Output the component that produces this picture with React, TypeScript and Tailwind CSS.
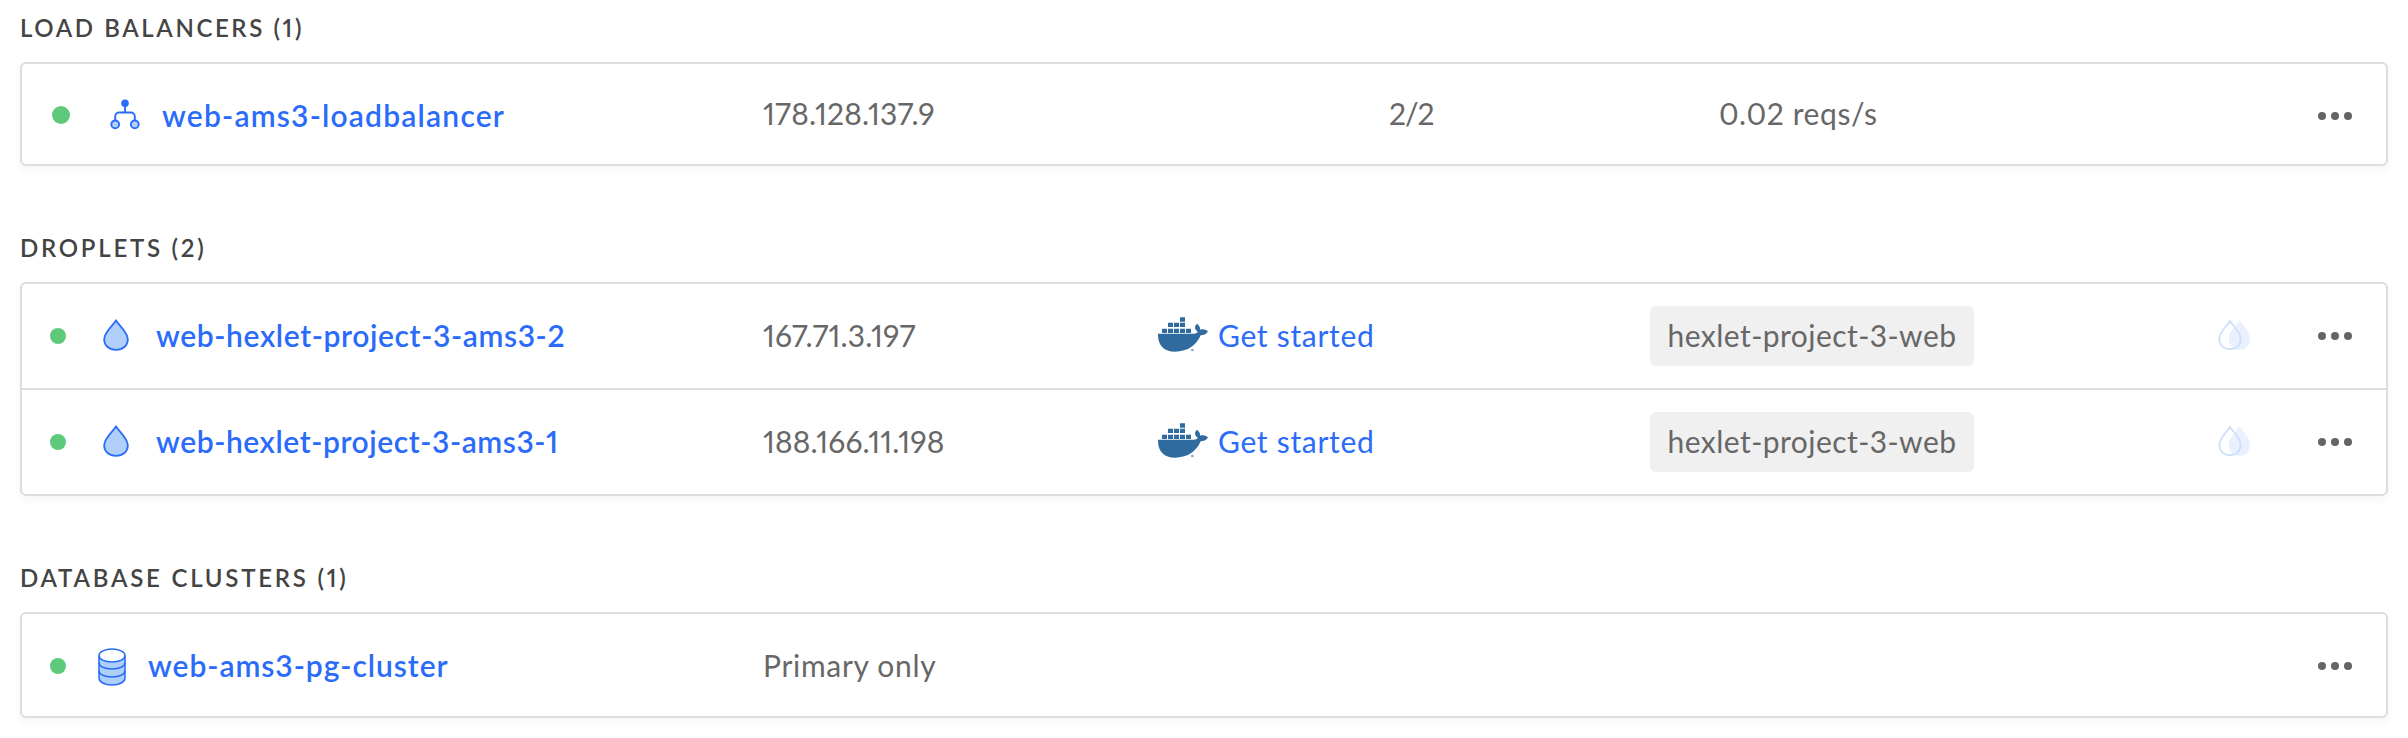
import type { ReactNode } from "react";

function Heading({ children, className }: { children: ReactNode; className: string }) {
  return (
    <h2 className={`h-[29px] whitespace-nowrap text-[24px] leading-[29px] font-semibold text-[#444444] ${className}`}>
      {children}
    </h2>
  );
}

function Card({ children, className = "" }: { children: ReactNode; className?: string }) {
  return (
    <div className={`rounded-[6px] border-2 border-[#dddddd] bg-white shadow-[0_4px_8px_rgba(0,0,0,0.04)] ${className}`}>
      {children}
    </div>
  );
}

function StatusDot({ className }: { className: string }) {
  return <span className={`shrink-0 rounded-full bg-[#5fc97b] ${className}`} />;
}

function LoadBalancerIcon() {
  return (
    <svg width="30" height="32" viewBox="0 0 30 32" fill="none" className="shrink-0">
      <path d="M15 4v10M5.2 21v-3.500a4 4 0 0 1 4-4h11.600a4 4 0 0 1 4 4V21" stroke="#2a6cf9" strokeWidth="1.9" />
      <circle cx="15" cy="4.200" r="3.800" fill="#2a6cf9" />
      <circle cx="5.200" cy="25.400" r="3.900" fill="#b3d0fb" stroke="#2a6cf9" strokeWidth="1.900" />
      <circle cx="24.800" cy="25.400" r="3.900" fill="#b3d0fb" stroke="#2a6cf9" strokeWidth="1.900" />
    </svg>
  );
}

function DropletIcon() {
  return (
    <svg width="26" height="32" viewBox="0 0 26 32" className="shrink-0">
      <path
        d="M13 1.600C9.500 7 1.200 13.500 1.200 20.200C1.200 26.800 6.300 30.800 13 30.800C19.700 30.800 24.800 26.800 24.800 20.200C24.800 13.500 16.500 7 13 1.600Z"
        fill="#b1cffb"
        stroke="#2a6cf9"
        strokeWidth="1.800"
      />
    </svg>
  );
}

function DatabaseIcon() {
  return (
    <svg width="28" height="38" viewBox="0 0 28 38" className="shrink-0">
      <g stroke="#2a6cf9" strokeWidth="1.500">
        <path d="M1 7.500V30c0 4 5.600 7 13 7s13-3 13-7V7.500" fill="#adcffa" />
        <ellipse cx="14" cy="7.500" rx="13" ry="6.500" fill="#ffffff" />
        <path d="M1 14.500c0 4 5.600 6.500 13 6.500s13-2.500 13-6.500M1 22.500c0 4 5.600 6.500 13 6.500s13-2.500 13-6.500" fill="none" />
      </g>
    </svg>
  );
}

function DockerIcon() {
  return (
    <svg width="50" height="35" viewBox="84 82 150 105" className="shrink-0" fill="#2f6b9f">
      <path d="M84 132H190C199 131 203 129 203 126C194 120 192 110 201 102C208 107 211 113 210 120C218 117 228 119 234 125C229 134 221 137 212 137C200 165 175 186 135 186C100 186 83 165 84 132Z" />
      <path d="M150 83h15v13h-15zM114 99h15v13h-15zM132 99h15v13h-15zM150 99h15v13h-15zM96 117h15v13h-15zM114 117h15v13h-15zM132 117h15v13h-15zM150 117h15v13h-15zM168 117h15v13h-15z" />
      <circle cx="187" cy="181" r="4" opacity="0.6" />
    </svg>
  );
}

function FloatingDropsIcon() {
  return (
    <svg width="34" height="32" viewBox="0 0 34 32" className="shrink-0">
      <path d="M21.500 1C18.500 6.500 10.700 12.500 10.700 19.800C10.700 26.500 15.500 31 21.500 31S32.300 26.500 32.300 19.800C32.300 12.500 24.500 6.500 21.500 1Z" fill="#eaf1fe" />
      <path d="M12 2C9 7 1.300 13 1.300 19.800C1.300 26 6 30.100 12 30.100S22.700 26 22.700 19.800C22.700 13 15 7 12 2Z" fill="none" stroke="#ccddfd" strokeWidth="1.700" />
    </svg>
  );
}

function MoreMenu({ className = "" }: { className?: string }) {
  return (
    <button aria-label="More" className={`mr-[34px] ml-auto flex gap-[5px] ${className}`}>
      <span className="size-2 rounded-full bg-[#646464]" />
      <span className="size-2 rounded-full bg-[#646464]" />
      <span className="size-2 rounded-full bg-[#646464]" />
    </button>
  );
}

function Name({ children, className }: { children: ReactNode; className: string }) {
  return <a className={`font-semibold text-[#2a6cf9] ${className}`}>{children}</a>;
}

type Droplet = { name: string; nameClass: string; ip: string };

const droplets: Droplet[] = [
  { name: "web-hexlet-project-3-ams3-2", nameClass: "tracking-[0.62px]", ip: "167.71.3.197" },
  { name: "web-hexlet-project-3-ams3-1", nameClass: "tracking-[0.57px]", ip: "188.166.11.198" },
];

function DropletRow({ name, nameClass, ip }: Droplet) {
  return (
    <div className="box-content flex h-[104px] items-center">
      <div className="flex w-[741px] items-center pl-7">
        <StatusDot className="mr-[37px] size-4" />
        <div className="mr-[27px] pb-[3px]">
          <DropletIcon />
        </div>
        <Name className={`pb-[3px] ${nameClass}`}>{name}</Name>
      </div>
      <div className="w-[395px] pb-[3px] tracking-[0.12px]">{ip}</div>
      <div className="flex w-[492px] items-center gap-[10px] pb-[3px]">
        <DockerIcon />
        <a className="tracking-[0.7px] text-[#2a6cf9]">Get started</a>
      </div>
      <div className="w-[568px]">
        <span className="flex h-[60px] w-[324px] items-center justify-center rounded-[6px] bg-[#f0f0f0] pb-[3px] tracking-[0.45px]">
          hexlet-project-3-web
        </span>
      </div>
      <div className="pb-[3px]">
        <FloatingDropsIcon />
      </div>
      <MoreMenu />
    </div>
  );
}

export default function App() {
  return (
    <main className="h-[738px] w-[2408px] overflow-hidden bg-white px-5 pt-[13px] font-['Lato',sans-serif] text-[30px] leading-9 whitespace-nowrap text-[#676767] proportional-nums">
      <section>
        <Heading className="tracking-[2.6px]">LOAD BALANCERS (1)</Heading>
        <Card className="mt-5">
          <div className="flex h-[100px] items-center">
            <div className="flex w-[741px] items-center pl-[30px]">
              <StatusDot className="mt-[2px] mr-[40px] size-[18px]" />
              <div className="mr-[22px] pt-[2px]">
                <LoadBalancerIcon />
              </div>
              <Name className="pt-px tracking-[1.2px]">web-ams3-loadbalancer</Name>
            </div>
            <div className="w-[626px] pb-[3px] tracking-[0.2px]">178.128.137.9</div>
            <div className="w-[330px] pb-[3px] tracking-[-1px]">2/2</div>
            <div className="pb-[3px] tracking-[0.6px]">0.02 reqs/s</div>
            <MoreMenu className="mt-[3px]" />
          </div>
        </Card>
      </section>

      <section className="mt-[67px]">
        <Heading className="tracking-[2.75px]">DROPLETS (2)</Heading>
        <Card className="mt-5 divide-y-2 divide-[#dddddd]">
          {droplets.map((droplet) => (
            <DropletRow key={droplet.name} {...droplet} />
          ))}
        </Card>
      </section>

      <section className="mt-[67px]">
        <Heading className="tracking-[2.78px]">DATABASE CLUSTERS (1)</Heading>
        <Card className="mt-5">
          <div className="flex h-[102px] items-center">
            <div className="flex w-[741px] items-center pl-7">
              <StatusDot className="mt-[2px] mr-[32px] size-4" />
              <div className="mr-[22px] pt-[3px]">
                <DatabaseIcon />
              </div>
              <Name className="tracking-[0.95px]">web-ams3-pg-cluster</Name>
            </div>
            <div className="pb-px tracking-[0.7px]">Primary only</div>
            <MoreMenu className="mt-[2px]" />
          </div>
        </Card>
      </section>
    </main>
  );
}
